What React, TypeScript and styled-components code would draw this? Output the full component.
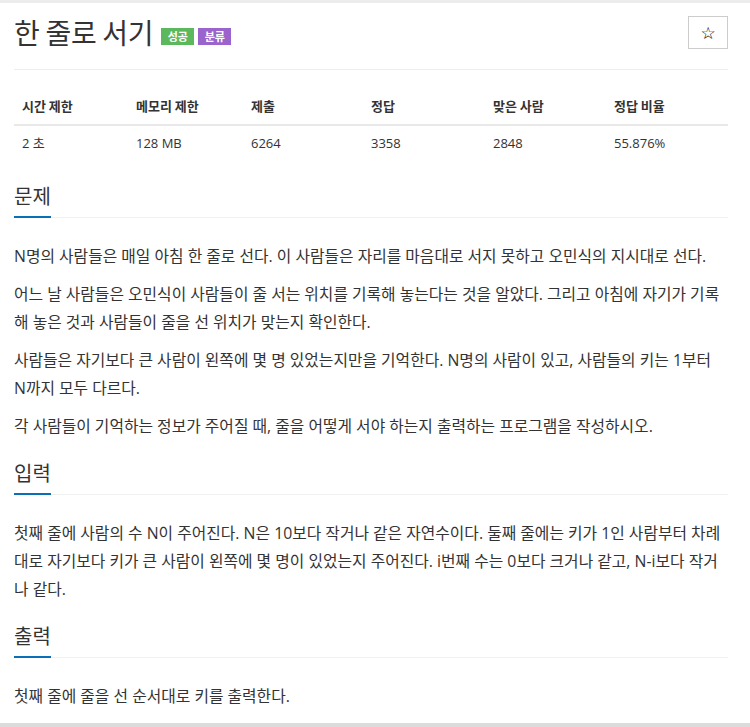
import React from 'react';
import styled, { createGlobalStyle } from 'styled-components';

const GlobalStyle = createGlobalStyle`
  html, body {
    margin: 0;
    padding: 0;
    background: #fff;
  }
  body {
    font-family: 'Open Sans', 'Noto Sans CJK KR', sans-serif;
    color: #333;
  }
`;

const Page = styled.div`
  box-sizing: border-box;
  min-height: 727px;
  padding: 13px 22px 0 14px;
  border-top: 3px solid #ececec;
  border-bottom: 4px solid #dcdcdc;
  display: flex;
  flex-direction: column;
`;

const Header = styled.div`
  display: flex;
  align-items: center;
  justify-content: space-between;
  height: 33px;
  padding-bottom: 20px;
  border-bottom: 1px solid #eee;
`;

const TitleGroup = styled.div`
  display: flex;
  align-items: center;
  gap: 4px;
`;

const Title = styled.h1`
  margin: 0 4px 0 0;
  font-family: 'Noto Sans CJK KR', sans-serif;
  font-size: 28px;
  font-weight: 400;
  line-height: 33px;
  letter-spacing: -0.3px;
  color: #333;
`;

type BadgeProps = {
  $color: string;
};

const Badge = styled.span<BadgeProps>`
  display: inline-flex;
  align-items: center;
  justify-content: center;
  margin-top: 8px;
  width: 33px;
  height: 17px;
  background: ${(props) => props.$color};
  color: #fff;
  font-family: 'Noto Sans CJK KR', sans-serif;
  font-size: 11px;
  font-weight: 700;
  line-height: 1;
`;

const StarButton = styled.button`
  box-sizing: border-box;
  width: 40px;
  height: 33px;
  padding: 0;
  border: 1px solid #ccc;
  background: #fff;
  color: #000;
  font-family: 'DejaVu Sans', sans-serif;
  font-size: 17px;
  cursor: pointer;
`;

const InfoTable = styled.table`
  width: 100%;
  margin-top: 18px;
  border-collapse: collapse;
  table-layout: fixed;
  font-size: 13px;

  th {
    padding: 8px;
    text-align: left;
    font-family: 'Noto Sans CJK KR', sans-serif;
    font-weight: 700;
    line-height: 20px;
    border-bottom: 2px solid #e8e8e8;
  }

  td {
    padding: 7px 8px;
    line-height: 20px;
  }
`;

const Section = styled.section`
  margin-top: 21px;
  &:first-of-type {
    margin-top: 24px;
  }
`;

const Heading = styled.h2`
  margin: 0;
  border-bottom: 1px solid #f0f0f0;
  font-family: 'Noto Sans CJK KR', sans-serif;
  font-size: 20px;
  font-weight: 400;
  line-height: 24px;
  color: #333;

  span {
    display: inline-block;
    padding-bottom: 8px;
    margin-bottom: -1px;
    border-bottom: 2px solid #0b6fb8;
  }
`;

const Body = styled.div`
  margin-top: 24px;
  font-size: 15.8px;
  line-height: 28px;
  color: #333;

  p {
    margin: 0 0 10px;
  }
  p:last-child {
    margin-bottom: 0;
  }
`;

const NoWrap = styled.span`
  white-space: nowrap;
`;

const columns = [
  { label: '시간 제한', value: '2 초', width: 114 },
  { label: '메모리 제한', value: '128 MB', width: 115 },
  { label: '제출', value: '6264', width: 120 },
  { label: '정답', value: '3358', width: 122 },
  { label: '맞은 사람', value: '2848', width: 121 },
  { label: '정답 비율', value: '55.876%', width: 122 },
];

const sections: { title: string; paragraphs: React.ReactNode[] }[] = [
  {
    title: '문제',
    paragraphs: [
      'N명의 사람들은 매일 아침 한 줄로 선다. 이 사람들은 자리를 마음대로 서지 못하고 오민식의 지시대로 선다.',
      '어느 날 사람들은 오민식이 사람들이 줄 서는 위치를 기록해 놓는다는 것을 알았다. 그리고 아침에 자기가 기록해 놓은 것과 사람들이 줄을 선 위치가 맞는지 확인한다.',
      <>
        사람들은 자기보다 큰 사람이 왼쪽에 몇 명 있었는지만을 기억한다. N명의 사람이 있고, 사람들의 키는 1부터{' '}
        <NoWrap>N까지</NoWrap> 모두 다르다.
      </>,
      '각 사람들이 기억하는 정보가 주어질 때, 줄을 어떻게 서야 하는지 출력하는 프로그램을 작성하시오.',
    ],
  },
  {
    title: '입력',
    paragraphs: [
      '첫째 줄에 사람의 수 N이 주어진다. N은 10보다 작거나 같은 자연수이다. 둘째 줄에는 키가 1인 사람부터 차례대로 자기보다 키가 큰 사람이 왼쪽에 몇 명이 있었는지 주어진다. i번째 수는 0보다 크거나 같고, N-i보다 작거나 같다.',
    ],
  },
  {
    title: '출력',
    paragraphs: ['첫째 줄에 줄을 선 순서대로 키를 출력한다.'],
  },
];

const App = () => {
  return (
    <>
      <GlobalStyle />
      <Page>
        <Header>
          <TitleGroup>
            <Title>한 줄로 서기</Title>
            <Badge $color='#5cb85c'>성공</Badge>
            <Badge $color='#9b63cc'>분류</Badge>
          </TitleGroup>
          <StarButton>☆</StarButton>
        </Header>
        <InfoTable>
          <colgroup>
            {columns.map((c) => (
              <col key={c.label} style={{ width: c.width }} />
            ))}
          </colgroup>
          <thead>
            <tr>
              {columns.map((c) => (
                <th key={c.label}>{c.label}</th>
              ))}
            </tr>
          </thead>
          <tbody>
            <tr>
              {columns.map((c) => (
                <td key={c.label}>{c.value}</td>
              ))}
            </tr>
          </tbody>
        </InfoTable>
        {sections.map((s) => (
          <Section key={s.title}>
            <Heading>
              <span>{s.title}</span>
            </Heading>
            <Body>
              {s.paragraphs.map((p, i) => (
                <p key={i}>{p}</p>
              ))}
            </Body>
          </Section>
        ))}
      </Page>
    </>
  );
};

export default App;
